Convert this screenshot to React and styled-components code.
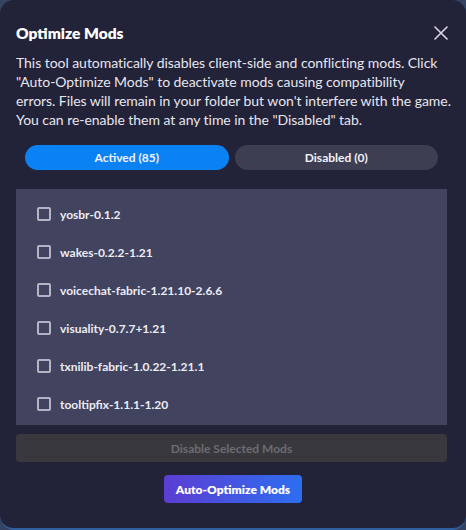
import React from "react";
import styled, { createGlobalStyle } from "styled-components";

const Global = createGlobalStyle`
  html, body { margin: 0; padding: 0; background: #34435f; }
  body { font-family: Lato, "Noto Sans", sans-serif; }
  * { box-sizing: border-box; }
`;

const Modal = styled.div`
  width: 466px;
  height: 530px;
  background: #222239;
  border-radius: 14px;
  border-bottom: 2px solid #2f5f9e;
  padding: 22px 19px 0 16px;
  display: flex;
  flex-direction: column;
  color: #e8e8f0;
`;

const Header = styled.div`
  display: flex;
  align-items: center;
  justify-content: space-between;
  height: 22px;
`;

const Title = styled.h2`
  margin: 0;
  font-size: 15.5px;
  font-weight: 800;
  color: #ffffff;
`;

const Close = styled.button`
  background: none;
  border: none;
  padding: 0;
  margin-right: -4px;
  width: 20px;
  height: 20px;
  display: flex;
  align-items: center;
  justify-content: center;
  color: #d8d8e4;
  cursor: pointer;
`;

const Desc = styled.p`
  margin: 9px -6px 0 0;
  font-size: 14px;
  line-height: 19px;
  letter-spacing: -0.05px;
  color: #e6e6ee;
  white-space: nowrap;
`;

const Tabs = styled.div`
  display: grid;
  grid-template-columns: 1fr 1fr;
  gap: 6px;
  margin: 16px 9px 0;
`;

const Tab = styled.button`
  height: 25px;
  border: none;
  border-radius: 13px;
  font-family: inherit;
  font-size: 12px;
  font-weight: 700;
  color: #f2f2f8;
  background: ${(p) => (p.$active ? "#0b82f4" : "#3e3e52")};
`;

const List = styled.div`
  margin-top: 19px;
  height: 236px;
  background: #42435e;
  overflow-y: scroll;
  padding-top: 6px;
  &::-webkit-scrollbar { width: 4px; }
  &::-webkit-scrollbar-track { background: #3a3b55; }
  &::-webkit-scrollbar-thumb { background: #8d8da6; border-radius: 1px; }
`;

const Row = styled.label`
  display: flex;
  align-items: center;
  gap: 9px;
  height: 38px;
  padding-left: 21px;
  font-size: 12px;
  font-weight: 700;
  color: #ececf4;
`;

const Box = styled.span`
  width: 14px;
  height: 14px;
  border: 2px solid #b4b4c6;
  border-radius: 2px;
  flex-shrink: 0;
`;

const DisableBtn = styled.button`
  margin-top: 9px;
  height: 28px;
  border: none;
  border-radius: 4px;
  background: #39393d;
  color: #6c6c72;
  font-family: inherit;
  font-size: 12px;
  font-weight: 700;
`;

const AutoBtn = styled.button`
  align-self: center;
  margin-top: 13px;
  width: 138px;
  height: 28px;
  border: none;
  border-radius: 4px;
  background: linear-gradient(90deg, #5c3dd2 0%, #2d6ef0 100%);
  color: #ffffff;
  font-family: inherit;
  font-size: 12px;
  font-weight: 800;
  margin-left: 3px;
`;

const first = [
  "yosbr-0.1.2",
  "wakes-0.2.2-1.21",
  "voicechat-fabric-1.21.10-2.6.6",
  "visuality-0.7.7+1.21",
  "txnilib-fabric-1.0.22-1.21.1",
  "tooltipfix-1.1.1-1.20",
];
const mods = [...first];
for (let i = mods.length; i < 85; i++) mods.push(`mod-${85 - i}.0.0-1.21`);

export default function App() {
  return (
    <>
      <Global />
      <Modal>
        <Header>
          <Title>Optimize Mods</Title>
          <Close aria-label="close">
            <svg width="14" height="14" viewBox="0 0 14 14" fill="none" stroke="currentColor" strokeWidth="1.6" strokeLinecap="round">
              <path d="M1 1L13 13M13 1L1 13" />
            </svg>
          </Close>
        </Header>
        <Desc>
          This tool automatically disables client-side and conflicting mods. Click
          <br />
          "Auto-Optimize Mods" to deactivate mods causing compatibility
          <br />
          errors. Files will remain in your folder but won't interfere with the game.
          <br />
          You can re-enable them at any time in the "Disabled" tab.
        </Desc>
        <Tabs>
          <Tab $active>Actived (85)</Tab>
          <Tab>Disabled (0)</Tab>
        </Tabs>
        <List>
          {mods.map((m) => (
            <Row key={m}>
              <Box />
              {m}
            </Row>
          ))}
        </List>
        <DisableBtn>Disable Selected Mods</DisableBtn>
        <AutoBtn>Auto-Optimize Mods</AutoBtn>
      </Modal>
    </>
  );
}
